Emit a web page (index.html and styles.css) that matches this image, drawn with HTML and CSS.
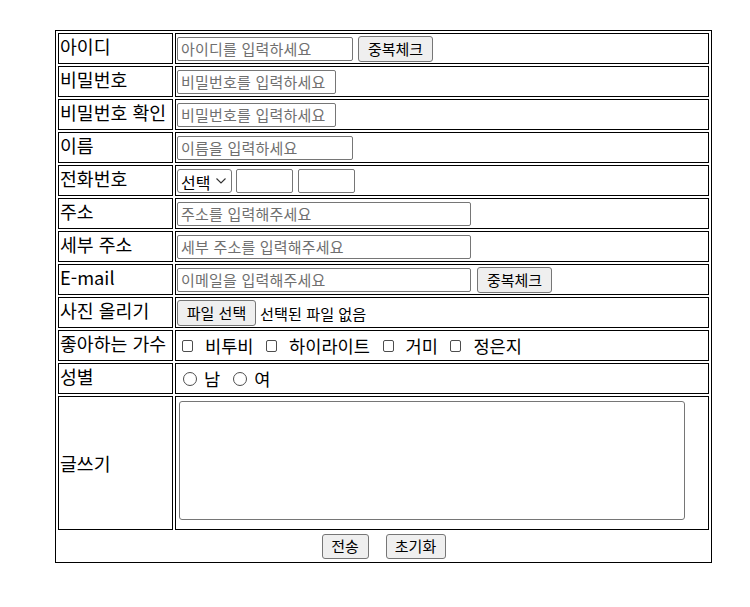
FILE: index.html
```html
<!DOCTYPE html>
<html lang="ko">
<head>
<meta charset="utf-8">
<title>회원가입</title>
<link rel="stylesheet" href="styles.css">
</head>
<body>
<form class="signup-form">
<table class="signup">
  <tr>
    <td class="label">아이디</td>
    <td class="field"><div class="ctrl"><input type="text" class="inp w-long" placeholder="아이디를 입력하세요"><button type="button" class="btn btn-row">중복체크</button></div></td>
  </tr>
  <tr>
    <td class="label">비밀번호</td>
    <td class="field"><div class="ctrl"><input type="password" class="inp w-pw" placeholder="비밀번호를 입력하세요"></div></td>
  </tr>
  <tr>
    <td class="label">비밀번호 확인</td>
    <td class="field"><div class="ctrl"><input type="password" class="inp w-pw" placeholder="비밀번호를 입력하세요"></div></td>
  </tr>
  <tr>
    <td class="label">이름</td>
    <td class="field"><div class="ctrl"><input type="text" class="inp w-long" placeholder="이름을 입력하세요"></div></td>
  </tr>
  <tr>
    <td class="label">전화번호</td>
    <td class="field"><div class="ctrl ctrl-phone"><select class="sel"><option>선택</option><option>010</option><option>011</option><option>016</option></select><input type="text" class="inp w-phone"><input type="text" class="inp w-phone w-phone-2"></div></td>
  </tr>
  <tr>
    <td class="label">주소</td>
    <td class="field"><div class="ctrl"><input type="text" class="inp w-addr" placeholder="주소를 입력해주세요"></div></td>
  </tr>
  <tr>
    <td class="label">세부 주소</td>
    <td class="field"><div class="ctrl"><input type="text" class="inp w-addr" placeholder="세부 주소를 입력해주세요"></div></td>
  </tr>
  <tr>
    <td class="label">E-mail</td>
    <td class="field"><div class="ctrl ctrl-mail"><input type="text" class="inp w-addr" placeholder="이메일을 입력해주세요"><button type="button" class="btn btn-row">중복체크</button></div></td>
  </tr>
  <tr>
    <td class="label">사진 올리기</td>
    <td class="field"><div class="ctrl ctrl-file"><button type="button" class="btn btn-file">파일 선택</button><span class="file-name">선택된 파일 없음</span></div></td>
  </tr>
  <tr>
    <td class="label">좋아하는 가수</td>
    <td class="field"><div class="choices choices-chk">
      <label class="choice"><input type="checkbox" class="chk">비투비</label>
      <label class="choice"><input type="checkbox" class="chk">하이라이트</label>
      <label class="choice"><input type="checkbox" class="chk">거미</label>
      <label class="choice"><input type="checkbox" class="chk">정은지</label>
    </div></td>
  </tr>
  <tr>
    <td class="label">성별</td>
    <td class="field"><div class="choices choices-rad">
      <label class="choice"><input type="radio" name="gender" class="rad">남</label>
      <label class="choice"><input type="radio" name="gender" class="rad">여</label>
    </div></td>
  </tr>
  <tr class="row-text">
    <td class="label">글쓰기</td>
    <td class="field field-top"><textarea class="txt"></textarea></td>
  </tr>
  <tr class="row-actions">
    <td class="actions" colspan="2"><div class="action-btns"><button type="submit" class="btn btn-act btn-send">전송</button><button type="reset" class="btn btn-act btn-reset">초기화</button></div></td>
  </tr>
</table>
</form>
</body>
</html>
```
FILE: styles.css
```css
html, body {
  margin: 0;
  padding: 0;
  background: #fff;
}
body {
  padding: 30px 0 0 55px;
  font-family: "Noto Sans CJK KR", "Noto Sans", sans-serif;
  color: #000;
}
.signup-form {
  margin: 0;
}
.signup {
  width: 657px;
  box-sizing: border-box;
  border: 1px solid #000;
  border-spacing: 2px;
  border-collapse: separate;
}
.signup tr {
  height: 31px;
}
.signup td {
  border: 1px solid #000;
  padding: 1px;
  vertical-align: middle;
  font-size: 18.3px;
  line-height: 24px;
}
.signup td.label {
  width: 111px;
  white-space: nowrap;
  padding: 0 1px 5px;
  line-height: 22px;
}
.signup tr.row-text td.label {
  padding: 1px;
}
.signup td.field-top {
  vertical-align: top;
}
.signup tr.row-text {
  height: 134px;
}
.signup tr.row-actions {
  height: 28px;
}
.signup td.actions {
  border: none;
  padding: 0;
}
.ctrl {
  display: flex;
  align-items: center;
  gap: 5px;
}
.ctrl-phone {
  gap: 4px;
}
.ctrl-mail {
  gap: 6px;
}
.ctrl-file {
  gap: 4px;
}
.inp {
  box-sizing: border-box;
  height: 24px;
  margin: 0;
  padding: 0 3px;
  border: 1px solid #767676;
  border-radius: 2px;
  font-family: "Noto Sans CJK KR", "Noto Sans", sans-serif;
  font-size: 15px;
  letter-spacing: 0.2px;
  color: #000;
  background: #fff;
}
.inp::placeholder {
  color: #6f6f6f;
}
.w-long { width: 176px; }
.w-pw { width: 159px; }
.w-addr { width: 294px; }
.w-phone { width: 57px; }
.w-phone-2 { margin-left: 1px; }
.sel {
  box-sizing: border-box;
  width: 55px;
  height: 24px;
  margin: 0;
  padding: 0 0 0 3px;
  border: 1px solid #767676;
  border-radius: 3px;
  font-family: "Noto Sans CJK KR", "Noto Sans", sans-serif;
  font-size: 16px;
  color: #000;
  -webkit-appearance: none;
  appearance: none;
  background: #fff url("data:image/svg+xml,%3Csvg xmlns='http://www.w3.org/2000/svg' width='10' height='6' viewBox='0 0 10 6'%3E%3Cpath d='M0.5 0.5 L5 5 L9.5 0.5' fill='none' stroke='%23333' stroke-width='1.1'/%3E%3C/svg%3E") no-repeat right 5px center;
}
.btn {
  box-sizing: border-box;
  margin: 0;
  border: 1px solid #767676;
  border-radius: 3px;
  background: #efefef;
  color: #000;
  font-family: "Noto Sans CJK KR", "Noto Sans", sans-serif;
  font-size: 15px;
  line-height: 18px;
  padding: 0;
  cursor: pointer;
}
.btn-row {
  height: 26px;
  width: 75px;
}
.btn-file {
  height: 26px;
  width: 79px;
}
.file-name {
  font-size: 15.2px;
  line-height: 20px;
}
.btn-act {
  height: 25px;
}
.btn-send { width: 47px; }
.btn-reset { width: 60px; }
.action-btns {
  display: flex;
  justify-content: center;
  gap: 17px;
}
.choices {
  display: flex;
  align-items: center;
}
.choice {
  display: inline-flex;
  align-items: center;
  font-size: 17.6px;
  line-height: 24px;
}
.choices-chk {
  padding-left: 5px;
  gap: 12.5px;
}
.choices-rad {
  padding-left: 6px;
  gap: 13px;
}
.chk {
  -webkit-appearance: none;
  appearance: none;
  box-sizing: border-box;
  width: 11px;
  height: 12px;
  margin: 0 12px 0 0;
  border: 1px solid #4d4d4d;
  border-radius: 2px;
  background: #fff;
}
.rad {
  -webkit-appearance: none;
  appearance: none;
  box-sizing: border-box;
  width: 14px;
  height: 14px;
  margin: 0 7px 0 0;
  border: 1px solid #4d4d4d;
  border-radius: 50%;
  background: #fff;
}
.txt {
  display: block;
  box-sizing: border-box;
  width: 506px;
  height: 119px;
  margin: 3px 0 0 2px;
  border: 1px solid #767676;
  border-radius: 3px;
  resize: none;
  font-family: "Noto Sans CJK KR", "Noto Sans", sans-serif;
}
```
